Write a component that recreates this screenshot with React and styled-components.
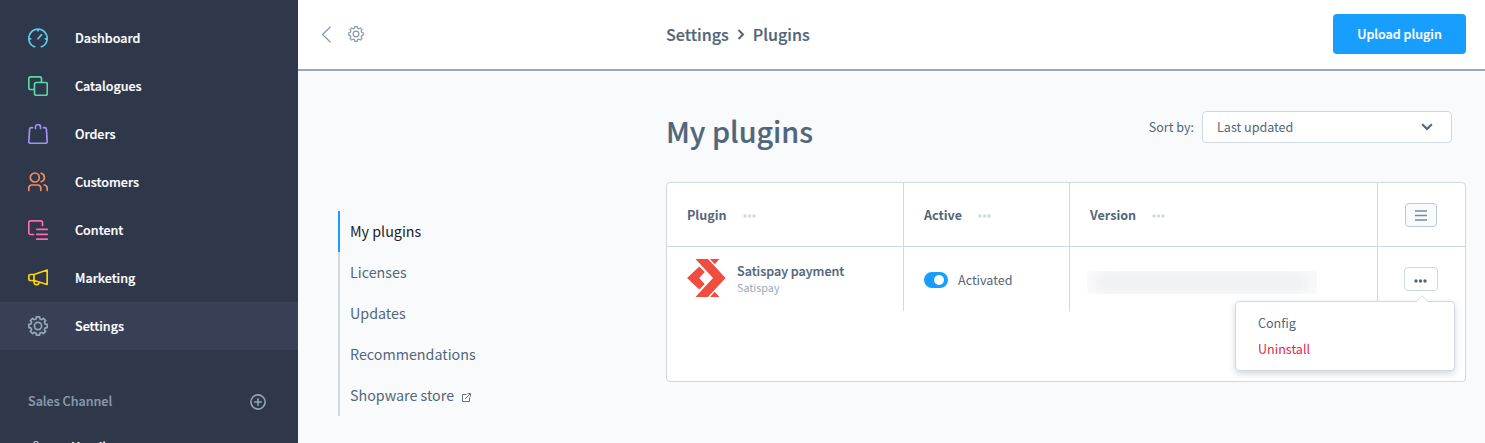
import React from 'react';
import styled, { createGlobalStyle, css } from 'styled-components';

const Global = createGlobalStyle`
  * { box-sizing: border-box; }
  body {
    margin: 0;
    overflow: hidden;
    background: #f9fafc;
    color: #52667a;
    font-family: "Noto Sans CJK SC", "Noto Sans", sans-serif;
    font-size: 12.55px;
    line-height: 20px;
  }
  svg { display: block; flex: none; }
`;

const semibold = css`
  font-weight: 500;
  -webkit-text-stroke: 0.2px currentColor;
`;

const Page = styled.div`
  display: flex;
  height: 443px;
  overflow: hidden;
`;

const Sidebar = styled.aside`
  width: 298px;
  flex: none;
  padding-top: 14px;
  overflow: hidden;
  background: #2f384b;
`;

const NavItem = styled.a`
  display: flex;
  align-items: center;
  gap: 27px;
  height: 48px;
  padding-left: 28px;
  color: #fff;
  ${semibold}
  background: ${(p) => (p.$active ? '#384058' : 'transparent')};
`;

const NavIcon = styled.svg.attrs({ width: 20, height: 20, viewBox: '0 0 20 20', fill: 'none', strokeWidth: 1.7, strokeLinecap: 'round', strokeLinejoin: 'round' })`
  stroke: ${(p) => p.$color};
`;

const ChannelHead = styled.div`
  display: flex;
  align-items: center;
  justify-content: space-between;
  margin-top: 39px;
  height: 24px;
  padding: 0 32px 0 28px;
  color: #8a9aad;
  ${semibold}
  svg { margin-top: 2px; }
`;

const ChannelItem = styled.div`
  display: flex;
  align-items: center;
  gap: 27px;
  height: 40px;
  margin-top: 14px;
  padding-left: 28px;
  color: #fff;
  ${semibold}
  svg { margin-top: 4px; }
`;

const Main = styled.main`
  flex: 1;
  min-width: 0;
  display: flex;
  flex-direction: column;
`;

const Header = styled.header`
  display: flex;
  align-items: center;
  height: 71px;
  padding: 0 19px 1px 23px;
  background: #fff;
  border-bottom: 2px solid #9aa8b9;
`;

const HeaderTools = styled.div`
  display: flex;
  align-items: center;
  gap: 15px;
  width: 345px;
`;

const Breadcrumb = styled.div`
  display: flex;
  align-items: center;
  gap: 8px;
  flex: 1;
  font-size: 16.1px;
  ${semibold}
  line-height: 24px;
`;

const UploadButton = styled.button`
  width: 133px;
  height: 40px;
  padding: 0;
  border: 0;
  border-radius: 4px;
  background: #189eff;
  color: #fff;
  font: 500 12.58px/40px "Noto Sans CJK SC", sans-serif;
  ${semibold}
`;

const Body = styled.div`
  display: flex;
  flex: 1;
`;

const SideMenu = styled.nav`
  width: 328px;
  margin: 140px 0 0 40px;
`;

const MenuLink = styled.a`
  display: flex;
  align-items: center;
  gap: 8px;
  height: 41px;
  padding: 0 0 2px 10px;
  border-left: 2px solid ${(p) => (p.$active ? '#189eff' : '#d1d9e0')};
  color: ${(p) => (p.$active ? '#1c2127' : '#52667a')};
  font-size: 14.3px;
  svg { margin-top: 5px; }
`;

const Content = styled.section`
  width: 800px;
`;

const TitleRow = styled.div`
  display: flex;
  align-items: flex-start;
  height: 111px;
  padding: 40px 14px 0 0;
`;

const Title = styled.h1`
  flex: 1;
  margin: 0;
  font-size: 28.75px;
  ${semibold}
  line-height: 40px;
`;

const SortLabel = styled.span`
  margin-right: 8px;
  line-height: 32px;
`;

const Select = styled.div`
  display: flex;
  align-items: center;
  justify-content: space-between;
  width: 250px;
  height: 32px;
  padding: 0 18px 0 14px;
  border: 1px solid #d1d9e0;
  border-radius: 4px;
  background: #fff;
`;

const Card = styled.div`
  height: 200px;
  border: 1px solid #d1d9e0;
  border-radius: 4px;
  background: #fff;
`;

const Row = styled.div`
  display: grid;
  grid-template-columns: 237px 166px 308px 87px;
  height: 64px;
  ${(p) => p.$head && css`
    border-bottom: 1px solid #d1d9e0;
    font-weight: 700;
  `}
`;

const Cell = styled.div`
  position: relative;
  display: flex;
  align-items: center;
  gap: ${(p) => p.$gap || 10}px;
  padding: ${(p) => p.$top || 0}px 20px ${(p) => p.$bottom || 0}px;
  border-right: 1px solid #d1d9e0;
  &:last-child {
    border-right: 0;
    padding: 0 2px 0 0;
    justify-content: center;
  }
`;

const DotsIcon = styled.svg.attrs({ width: 13, height: 4, viewBox: '0 0 13 4' })`
  margin-top: 3px;
  fill: ${(p) => p.$color};
`;

const PluginText = styled.div`
  display: flex;
  flex-direction: column;
`;

const PluginName = styled.span`
  ${semibold}
  line-height: 18px;
`;

const PluginVendor = styled.span`
  color: #9aa8b9;
  font-size: 10.75px;
  line-height: 15px;
`;

const Switch = styled.span`
  display: flex;
  justify-content: flex-end;
  width: 24px;
  height: 16px;
  padding: 3px 4px;
  border-radius: 8px;
  background: #189eff;
  &::after {
    content: "";
    width: 10px;
    height: 10px;
    border-radius: 50%;
    background: #fff;
  }
`;

const Redacted = styled.div`
  width: 230px;
  height: 23px;
  margin: 6px 0 0 -3px;
  overflow: hidden;
  background: #fafafb;
  &::after {
    content: "";
    display: block;
    height: 19px;
    margin: 2px 9px;
    border-radius: 6px;
    background: #eff0f2;
    filter: blur(6px);
  }
`;

const SmallButton = styled.button`
  display: flex;
  align-items: center;
  justify-content: center;
  width: ${(p) => p.$w}px;
  height: 24px;
  padding: 0;
  border: 1px solid ${(p) => (p.$filled ? '#bcc8d4' : '#d1d9e0')};
  border-radius: 4px;
  background: ${(p) => (p.$filled ? '#f9fafc' : '#fff')};
`;

const BarsIcon = styled.svg`
  margin-top: 2px;
`;

const Menu = styled.div`
  position: absolute;
  z-index: 2;
  top: 54px;
  right: 10px;
  width: 220px;
  height: 70px;
  padding: 8px 22px;
  border: 1px solid #d1d9e0;
  border-radius: 4px;
  background: #fff;
  box-shadow: 0 3px 6px rgba(82, 102, 122, 0.25);
`;

const MenuArrow = styled.svg`
  position: absolute;
  top: -7px;
  right: 25px;
`;

const MenuItem = styled.div`
  height: 26px;
  line-height: 26px;
  color: ${(p) => (p.$danger ? '#de294c' : '#52667a')};
`;

const polar = (radius, degrees) => {
  const angle = (degrees * Math.PI) / 180;
  return `${(10 + radius * Math.sin(angle)).toFixed(2)} ${(10 - radius * Math.cos(angle)).toFixed(2)}`;
};

const gearPath = `M${Array.from({ length: 8 }, (_, i) => i * 45)
  .flatMap((a) => [polar(7.4, a - 14), polar(9.3, a - 10), polar(9.3, a + 10), polar(7.4, a + 14)])
  .join('L')}Z`;

const Gear = () => (
  <>
    <path d={gearPath} />
    <circle cx="10" cy="10" r="3.6" />
  </>
);

const Dots = ({ color }) => (
  <DotsIcon $color={color}>
    <circle cx="2" cy="2" r="1.7" />
    <circle cx="6.5" cy="2" r="1.7" />
    <circle cx="11" cy="2" r="1.7" />
  </DotsIcon>
);

const Logo = () => (
  <svg width="39" height="38" viewBox="0 0 39 38" fill="#f04c40">
    <path d="M8.500 0H21l17.500 19L21 38H8.500L26 19z" />
    <path d="M12.300 7.500 17.700 13 12.200 19 17.700 25 12.300 30.500 0 19z" />
    <path d="M23 0H32.500L27.800 5.300zM23 38H32.500L27.800 32.700z" />
  </svg>
);

const navigation = [
  { label: 'Dashboard', color: '#5cc8e8', icon: <><path d="M6.600 18.600H5.800A9.200 9.200 0 1 1 14.200 18.600H13.400M10 1.200v1.600M1 10.800h1.700M17.300 10.800H19M10 10.800l3.600-4.200" /></> },
  { label: 'Catalogues', color: '#57d9a3', icon: <><path d="M6 13.500H2.500a1.700 1.700 0 0 1-1.700-1.700v-9.300A1.700 1.700 0 0 1 2.500.8h9.300a1.700 1.700 0 0 1 1.700 1.700V6" /><rect x="6.500" y="6.500" width="12.800" height="12.800" rx="1.700" /></> },
  { label: 'Orders', color: '#a092f0', icon: <path d="M4.500 3.700H3.300a1.700 1.700 0 0 0-1.700 1.600L.8 17.500a1.700 1.700 0 0 0 1.700 1.800h15a1.700 1.700 0 0 0 1.700-1.800L18.400 5.300a1.700 1.700 0 0 0-1.700-1.600h-1.200M7.500 4.500V3a2.500 2.500 0 0 1 5 0v1.500" /> },
  { label: 'Customers', color: '#f58a60', icon: <><circle cx="6.800" cy="5.500" r="4.500" /><path d="M.8 18.500V16a3 3 0 0 1 3-3h6a3 3 0 0 1 3 3v2.500M13.200 1.200a4.500 4.500 0 0 1 0 8.600M16 13a3.300 3.300 0 0 1 3.200 3v2.500" /></> },
  { label: 'Content', color: '#ff68b4', icon: <path d="M5.500 14.500H2.500a1.700 1.700 0 0 1-1.700-1.700V2.500A1.700 1.700 0 0 1 2.500.8h10.300a1.700 1.700 0 0 1 1.700 1.700v3M8.800 9.300h10.500M8.800 14.300h10.500M8.800 19.200h10.500" /> },
  { label: 'Marketing', color: '#ffd500', icon: <path d="M6 6.500 19.200 2v14.500L6 12.500zM6 6.500H2.300A1.500 1.500 0 0 0 .8 8v3A1.500 1.500 0 0 0 2.300 12.500H6M5.800 12.500l.4 2.500a2 2 0 0 0 2 1.600h1a1.600 1.600 0 0 0 1.600-1.900l-.1-.5" /> },
  { label: 'Settings', color: '#93a5b8', icon: <Gear /> },
];

const menuLinks = ['My plugins', 'Licenses', 'Updates', 'Recommendations', 'Shopware store'];

export default function App() {
  return (
    <Page>
      <Global />
      <Sidebar>
        {navigation.map(({ label, color, icon }) => (
          <NavItem key={label} $active={label === 'Settings'}>
            <NavIcon $color={color}>{icon}</NavIcon>
            {label}
          </NavItem>
        ))}
        <ChannelHead>
          Sales Channel
          <svg width="16" height="16" viewBox="0 0 16 16" fill="none" stroke="#93a5b8" strokeWidth="1.6">
            <circle cx="8" cy="8" r="7.100" />
            <path d="M8 4.200v7.600M4.200 8h7.600" />
          </svg>
        </ChannelHead>
        <ChannelItem>
          <svg width="16" height="16" viewBox="0 0 20 20" fill="none" stroke="#b3bfcc" strokeWidth="1.600">
            <path d="M4.500 3.700H3.300L.8 19.300h18.400L16.700 3.700h-1.200M7.500 4.500V3a2.500 2.500 0 0 1 5 0v1.500" />
          </svg>
          Headless
        </ChannelItem>
      </Sidebar>
      <Main>
        <Header>
          <HeaderTools>
            <svg width="10" height="17" viewBox="0 0 10 17" fill="none" stroke="#8497ab" strokeWidth="1.200">
              <path d="M9.500 .7 1.500 8.500l8 7.800" />
            </svg>
            <svg width="20" height="20" viewBox="-2.500 -2.500 25 25" fill="none" stroke="#8497ab" strokeWidth="1.400" strokeLinejoin="round">
              <Gear />
            </svg>
          </HeaderTools>
          <Breadcrumb>
            Settings
            <svg width="8" height="11" viewBox="0 0 8 11" fill="none" stroke="#52667a" strokeWidth="2">
              <path d="m1.500 1 4.500 4.500L1.500 10" />
            </svg>
            Plugins
          </Breadcrumb>
          <UploadButton>Upload plugin</UploadButton>
        </Header>
        <Body>
          <SideMenu>
            {menuLinks.map((label) => (
              <MenuLink key={label} $active={label === 'My plugins'}>
                {label}
                {label === 'Shopware store' && (
                  <svg width="9" height="9" viewBox="0 0 9 9" fill="none" stroke="#52667a" strokeWidth="0.900">
                    <path d="M4.500 1.500h-4v7h7v-4M3 6l5.300-5.300M5.500.5h3v3" />
                  </svg>
                )}
              </MenuLink>
            ))}
          </SideMenu>
          <Content>
            <TitleRow>
              <Title>My plugins</Title>
              <SortLabel>Sort by:</SortLabel>
              <Select>
                Last updated
                <svg width="12" height="8" viewBox="0 0 12 8" fill="none" stroke="#52667a" strokeWidth="2.200">
                  <path d="m1.200 1.200 4.800 4.800 4.800-4.800" />
                </svg>
              </Select>
            </TitleRow>
            <Card>
              <Row $head>
                {['Plugin', 'Active', 'Version'].map((label) => (
                  <Cell key={label} $gap={16}>
                    {label}
                    <Dots color="#d1d9e0" />
                  </Cell>
                ))}
                <Cell>
                  <SmallButton $w={32} $filled>
                    <BarsIcon width="12" height="11" viewBox="0 0 12 11" stroke="#758ca3" strokeWidth="1.500">
                      <path d="M0 1h12M0 5.500h12M0 10h12" />
                    </BarsIcon>
                  </SmallButton>
                </Cell>
              </Row>
              <Row>
                <Cell $gap={11} $bottom={2}>
                  <Logo />
                  <PluginText>
                    <PluginName>Satispay payment</PluginName>
                    <PluginVendor>Satispay</PluginVendor>
                  </PluginText>
                </Cell>
                <Cell $top={2}>
                  <Switch />
                  Activated
                </Cell>
                <Cell><Redacted /></Cell>
                <Cell>
                  <SmallButton $w={34}><Dots color="#52667a" /></SmallButton>
                  <Menu>
                    <MenuArrow width="14" height="8" viewBox="0 0 14 8">
                      <path d="M1 7.500 7 1l6 6.500V8H1z" fill="#fff" />
                      <path d="M1 6.500 7 .8l6 5.700" fill="none" stroke="#d1d9e0" />
                    </MenuArrow>
                    <MenuItem>Config</MenuItem>
                    <MenuItem $danger>Uninstall</MenuItem>
                  </Menu>
                </Cell>
              </Row>
            </Card>
          </Content>
        </Body>
      </Main>
    </Page>
  );
}
